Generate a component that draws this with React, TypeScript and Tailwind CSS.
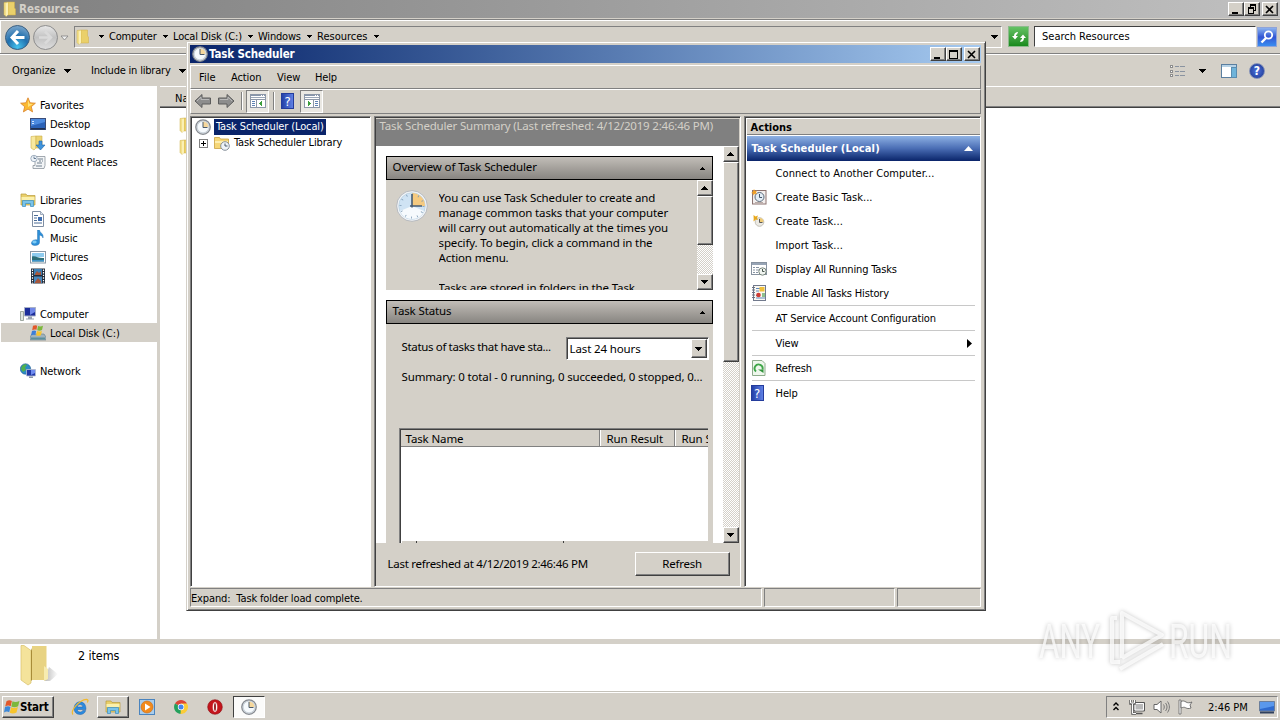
import React from 'react';
import clsx from 'clsx';

type IconProps = { size?: number; className?: string };

const raised =
  'border border-t-white border-l-white border-r-[#404040] border-b-[#404040] bg-[#d4d0c8] shadow-[inset_-1px_-1px_0_#808080]';

/* ---------- icons ---------- */

const Caret = ({ className = '' }: { className?: string }) => (
  <svg width="7" height="4" viewBox="0 0 7 4" className={clsx('shrink-0', className)} shapeRendering="crispEdges">
    <path d="M0 0h7L3.5 4z" fill="#000" />
  </svg>
);

const CrumbCaret = ({ className = '' }: { className?: string }) => (
  <svg width="5" height="3" viewBox="0 0 5 3" className={clsx('mr-[5px] ml-[7px] shrink-0', className)} shapeRendering="crispEdges">
    <path d="M0 0h5L2.5 3z" fill="#000" />
  </svg>
);

const CaretUp = ({ className = '' }: { className?: string }) => (
  <svg width="7" height="4" viewBox="0 0 7 4" className={clsx('shrink-0', className)} shapeRendering="crispEdges">
    <path d="M0 4h7L3.5 0z" fill="#000" />
  </svg>
);

const FolderIcon = ({ size = 16, className = '' }: IconProps) => (
  <svg width={size} height={size} viewBox="0 0 16 16" className={clsx('shrink-0', className)}>
    <path d="M2 1.500l4-.5v12.500l-2 2-2-2z" fill="#f3e08b" stroke="#cfb04b" strokeWidth=".5" />
    <path d="M6 1h6.500v6l1 1v6H6z" fill="#ead06a" stroke="#cfae48" strokeWidth=".5" />
    <path d="M6 1.200v12.500l-2 1.800V2.500z" fill="#fbf0b4" />
  </svg>
);

const ExplorerIcon = ({ size = 16, className = '' }: IconProps) => (
  <svg width={size} height={size} viewBox="0 0 16 16" className={clsx('shrink-0', className)}>
    <path d="M1 2h5l1 1.500h8V13H1z" fill="#e9cf6b" stroke="#b99b3c" strokeWidth=".7" />
    <path d="M1.500 5h13v3h-13z" fill="#fbf0ac" />
    <path d="M2.500 14.500V8.500h11v6h-3v-3h-5v3z" fill="#79c3ea" stroke="#3a8cc0" strokeWidth=".7" />
  </svg>
);

const StarIcon = () => (
  <svg width="16" height="16" viewBox="0 0 16 16" className="shrink-0">
    <path d="M8 .8l2.100 5 5.300.4-4.100 3.500 1.300 5.200L8 12.100l-4.600 2.800 1.300-5.200L.6 6.200l5.300-.4z" fill="#fbb931" stroke="#d9822b" strokeWidth=".8" />
    <path d="M8 3l1.300 3.700 3.700.3-5 3z" fill="#ffe27a" />
  </svg>
);

const DesktopIcon = () => (
  <svg width="16" height="16" viewBox="0 0 16 16" className="shrink-0">
    <rect x=".5" y="2.500" width="15" height="11" fill="#2b62b8" stroke="#3a4c78" />
    <path d="M1 3h14v3L1 10z" fill="#4d8be0" />
    <path d="M1 12h14v1.500H1z" fill="#20304f" />
    <path d="M2 5h2v1H2zM2 7h2v1H2z" fill="#cfe3ff" />
  </svg>
);

const DownloadsIcon = () => (
  <svg width="16" height="16" viewBox="0 0 16 16" className="shrink-0">
    <path d="M1 1.500L6 1v12l-2 2-3-2z" fill="#f8e99f" stroke="#cfb04b" strokeWidth=".6" />
    <path d="M6 1h6v12H6z" fill="#ecd472" stroke="#cfb04b" strokeWidth=".6" />
    <path d="M9 6h3v4h3l-4.500 5L6 10h3z" fill="#3f93dc" stroke="#1f64a8" strokeWidth=".6" />
  </svg>
);

const RecentIcon = () => (
  <svg width="16" height="16" viewBox="0 0 16 16" className="shrink-0">
    <path d="M5 2.500h10v9l-1 3H3v-3h2z" fill="#f2f4f6" stroke="#8b949d" strokeWidth=".8" />
    <path d="M8 5h5M9 7h2M12 7h1M7 9h5M6 12h6" stroke="#71808f" />
    <circle cx="4" cy="4.500" r="3.200" fill="#eef3f8" stroke="#8b9db0" strokeWidth=".8" />
    <path d="M4 2.500v2h2" stroke="#47607c" strokeWidth=".8" fill="none" />
  </svg>
);

const DocumentIcon = () => (
  <svg width="16" height="16" viewBox="0 0 16 16" className="shrink-0">
    <path d="M2.500.5h8l3 3v12h-11z" fill="#fff" stroke="#7f8ea3" />
    <path d="M10.500.5v3h3" fill="#dde6f0" stroke="#7f8ea3" strokeWidth=".7" />
    <path d="M4 4.500h4M4 7h3M4 9.500h3M4 12h8" stroke="#4c6c96" />
    <path d="M8 6h4v4H8z" fill="#3e6db0" />
  </svg>
);

const MusicIcon = () => (
  <svg width="16" height="16" viewBox="0 0 16 16" className="shrink-0">
    <path d="M7.500 0h2c.3 3 4.500 3.500 3.500 8-.5-2-2-2.500-3.500-3v7.500c0 2-2 3-4.500 3s-4-1-3.500-3 3-3.300 6-2.500z" fill="#2d8fd8" stroke="#1764a6" strokeWidth=".4" />
    <ellipse cx="4.500" cy="12" rx="2.200" ry="1.400" fill="#7ccbf5" />
  </svg>
);

const PictureIcon = () => (
  <svg width="16" height="16" viewBox="0 0 16 16" className="shrink-0">
    <rect x=".5" y="2.500" width="15" height="11.500" fill="#fff" stroke="#8b98a5" />
    <path d="M2 4h12v4H2z" fill="#8ecbee" />
    <path d="M2 7.500c4-1 6 2 12 1.500v3.500H2z" fill="#2d6f78" />
    <path d="M2 11h12v1.500H2z" fill="#3d93c9" />
  </svg>
);

const VideoIcon = () => (
  <svg width="16" height="16" viewBox="0 0 16 16" className="shrink-0">
    <path d="M1 .5h14v15H1z" fill="#222b38" />
    <path d="M4 1h8v6H4z" fill="#3c7fb5" />
    <path d="M4 8.500h8v6.500H4z" fill="#4688be" />
    <path d="M5 6l2-3 2 2 2-2v4H5zM5 14l3-4 3 3v2H5z" fill="#a6573c" />
    <path d="M2.500 1.500v14M13.500 1.500v14" stroke="#fff" strokeWidth="1.200" strokeDasharray="1.400 1.200" />
  </svg>
);

const ComputerIcon = () => (
  <svg width="16" height="16" viewBox="0 0 16 16" className="shrink-0">
    <path d="M.5 5.500h3v9h-3z" fill="#dfe4e0" stroke="#8a958d" strokeWidth=".8" />
    <path d="M4.500 1.500h11v8.500h-11z" fill="#1c2d9a" stroke="#a8b1c7" />
    <path d="M10 2h5v4l-5 3z" fill="#7087e8" />
    <path d="M8 10.500h4v2h2v1H6v-1h2z" fill="#98a1b0" />
  </svg>
);

const WinFlag = ({ size = 16 }: { size?: number }) => (
  <svg width={size} height={size} viewBox="0 0 16 16" className="shrink-0">
    <path d="M2.500 2.300C4.500 1 6.200 1.100 7.900 2L6.700 7.200C5 6.400 3.300 6.400 1.200 7.400z" fill="#e2582a" />
    <path d="M8.500 2.300c1.900 1 4.300.9 7-.4l-1.400 5.400c-2.500 1.200-4.800 1.100-6.800.2z" fill="#7cb83c" />
    <path d="M1 8.100c2-1 3.800-1 5.500-.2L5.200 13.200c-1.700-.9-3.500-.8-5.200.3z" fill="#3c88d8" />
    <path d="M7.100 8.200c2 1 4.300 1 6.800-.2l-1.400 5.500c-2.600 1.300-4.800 1.200-6.700.2z" fill="#f7c42c" />
  </svg>
);

const DiskIcon = () => (
  <svg width="16" height="16" viewBox="0 0 16 16" className="shrink-0">
    <path d="M2 9h12l2 3v3H0v-3z" fill="#9fb2bd" stroke="#667b88" strokeWidth=".6" />
    <path d="M1 12.500h14v2H1z" fill="#5b8f9b" />
    <path d="M3 .8c2-.9 3-.7 4.200-.1L6.400 5c-1.200-.6-2.500-.6-4.200.2z" fill="#e2582a" />
    <path d="M8 1c1.400.6 3 .6 5-.2l-1 4.300c-1.700.8-3.400.8-4.800.2z" fill="#7cb83c" />
    <path d="M2 6c1.500-.8 3-.7 4.200-.1l-.9 4.200C4 9.500 2.500 9.500 1 10.300z" fill="#3c7fd8" />
    <path d="M7 6.100c1.400.7 3 .6 4.900-.2l-1 4.300c-1.700.8-3.300.8-4.800.2z" fill="#f7c42c" />
  </svg>
);

const NetworkIcon = () => (
  <svg width="16" height="16" viewBox="0 0 16 16" className="shrink-0">
    <circle cx="5.500" cy="6" r="5.200" fill="#2d8ac6" stroke="#1c5b94" strokeWidth=".6" />
    <path d="M2 3c2-2 4-2.500 5-1L5 4.500 6 7 3 9 1 6z" fill="#50b04c" />
    <path d="M6.500 6.500h9v6.500h-9z" fill="#2238a8" stroke="#b8c2d4" strokeWidth=".8" />
    <path d="M11 7h4v3l-4 2z" fill="#6f8cf0" />
    <path d="M9 13.500h4v1.500H9z" fill="#8b97aa" />
  </svg>
);

const ClockIcon = ({ size = 16, className = '' }: IconProps) => (
  <svg width={size} height={size} viewBox="0 0 32 32" className={clsx('shrink-0', className)}>
    <circle cx="16" cy="16" r="14.500" fill="#d5dbe1" stroke="#85898f" strokeWidth="2.500" />
    <circle cx="16" cy="16" r="11.500" fill="#f6fafd" stroke="#b4c0cb" />
    <path d="M16 16V5a11 11 0 0 1 11 11z" fill="#f5d79c" />
    <path d="M16 6v11h9" fill="none" stroke="#4b5a6b" strokeWidth="2" />
  </svg>
);

const BigClock = () => (
  <svg width="32" height="32" viewBox="0 0 32 32" className="shrink-0">
    <circle cx="16" cy="16" r="15.300" fill="#f2f5f8" stroke="#a9afb6" strokeWidth=".8" />
    <circle cx="16" cy="16" r="13.300" fill="#cfe3f4" stroke="#b4cbdc" strokeWidth=".6" />
    <path d="M4 21A13 13 0 0 0 28 21L16 16z" fill="#f6fafd" />
    <path d="M16 16V3a13 13 0 0 1 13 13z" fill="#f5ca80" />
    <circle cx="16" cy="16" r="11.500" fill="none" stroke="#7d9ab4" strokeWidth="2" strokeDasharray=".8 5.220" />
    <path d="M16 4v13.500M14 16h12" stroke="#465c74" strokeWidth="1.600" />
  </svg>
);

const FolderClockIcon = () => (
  <svg width="16" height="16" viewBox="0 0 16 16" className="shrink-0">
    <path d="M.5 2.500h5l1 1.500h8v9.500H.5z" fill="#f6d778" stroke="#c9a143" strokeWidth=".8" />
    <path d="M1 6h13v2H1z" fill="#fdeeb0" />
    <circle cx="11" cy="11" r="4.300" fill="#eef3f8" stroke="#7a858f" strokeWidth=".9" />
    <path d="M11 8.500V11h2.500" fill="none" stroke="#4a5a6b" />
  </svg>
);

const ArrowGray = ({ flip = false }: { flip?: boolean }) => (
  <svg width="18" height="16" viewBox="0 0 18 16" className={clsx('shrink-0', flip && '-scale-x-100')}>
    <path d="M1 8l7-6.500V5h8.500v6H8v3.500z" fill="#8d8d8d" stroke="#5c5c5c" strokeLinejoin="round" />
    <path d="M3 8l4-4v2.500h8" fill="none" stroke="#b9b9b9" />
  </svg>
);

const PanelIcon = ({ right = false }: { right?: boolean }) => (
  <svg width="16" height="14" viewBox="0 0 16 14" className="shrink-0" shapeRendering="crispEdges">
    <rect x=".5" y=".5" width="15" height="13" fill="#fff" stroke="#8c97a8" />
    <path d="M1 1h14v1H1z" fill="#8796ac" />
    <path d="M1 3h14v1H1z" fill="#9aa6b8" />
    <path d="M11 1h1v1h-1zM13 1h1v1h-1z" fill="#fff" />
    {right ? (
      <>
        <path d="M9.500 5v8M1 5.500h14" stroke="#8c97a8" />
        <path d="M11 7.500h3M11 9.500h3M11 11.500h3" stroke="#5f83b5" />
        <path d="M4 7l3 2.500L4 12z" fill="#3c9d3c" />
      </>
    ) : (
      <>
        <path d="M6.500 5v8M1 5.500h14" stroke="#8c97a8" />
        <path d="M2 7.500h3M2 9.500h3M2 11.500h3" stroke="#5f83b5" />
        <path d="M12 7v5L9 9.500z" fill="#3c9d3c" />
      </>
    )}
  </svg>
);

const HelpBook = ({ className = '' }: { className?: string }) => (
  <span
    className={clsx(
      'flex h-4 w-[13px] shrink-0 items-center justify-center border border-[#243c9c] bg-linear-to-r from-[#2440a8] to-[#5f80e4] text-[13px] leading-none text-white',
      className
    )}
  >
    ?
  </span>
);

const BasicTaskIcon = () => (
  <svg width="16" height="16" viewBox="0 0 16 16" className="shrink-0">
    <rect x="1.500" y="1.500" width="13.500" height="13.500" fill="#f3efee" stroke="#8c7370" />
    <circle cx="8.500" cy="8" r="4.500" fill="#e3edf6" stroke="#5c6b7a" />
    <path d="M8.500 5v3.500H11" fill="none" stroke="#44566a" />
    <path d="M3 0l1 2 2-.5L5 3.500 6 5l-2.200-.3L2.500 6.500 2 4.500 0 4l1.800-1z" fill="#f0a028" />
    <path d="M4 13.500h8" stroke="#b8aaa6" />
  </svg>
);

const TaskIcon = () => (
  <svg width="16" height="16" viewBox="0 0 16 16" className="shrink-0">
    <circle cx="8.500" cy="9" r="4.300" fill="#eceae4" stroke="#c4c1b8" />
    <path d="M8.500 9V5a4 4 0 0 1 4 4z" fill="#f0cc78" />
    <path d="M8.500 6v3.500h3" fill="none" stroke="#5b5a55" />
    <path d="M2.500 2l2 1.500 2.500-1L6 5l1 2-2.200-.5L2.500 8.500l.2-2.800z" fill="#e8a81c" />
  </svg>
);

const RunningIcon = () => (
  <svg width="16" height="16" viewBox="0 0 16 16" className="shrink-0">
    <rect x=".5" y="1.500" width="15" height="12" fill="#fff" stroke="#8792a0" />
    <path d="M1 2h14v2H1z" fill="#97a4b5" />
    <path d="M2 6.500h2M5 6.500h3M2 9h2M5 9h3M2 11.500h2M5 11.500h2" stroke="#8794a4" />
    <circle cx="11.500" cy="10.500" r="3.700" fill="#f0f4f0" stroke="#78857c" />
    <path d="M11.500 8v2.500h2" fill="none" stroke="#46554c" />
  </svg>
);

const HistoryIcon = () => (
  <svg width="16" height="16" viewBox="0 0 16 16" className="shrink-0">
    <rect x="2.500" y=".5" width="12" height="15" fill="#faf8f2" stroke="#71798c" />
    <path d="M1 2.500h3M1 5h3M1 7.500h3M1 10h3M1 12.500h3" stroke="#6b7080" />
    <path d="M5 3.500h4M5 6h3M5 10.500h2M5 13h9" stroke="#5f88bd" />
    <rect x="8.500" y="2" width="5" height="4.500" fill="#f0c03a" />
    <circle cx="7.500" cy="10" r="2.300" fill="#d03c34" />
    <path d="M11 8h3v4h-3z" fill="#8ec08c" />
  </svg>
);

const RefreshIcon = () => (
  <svg width="16" height="16" viewBox="0 0 16 16" className="shrink-0">
    <path d="M1.500.5h9.500l3 3v12H1.500z" fill="#eef7ec" stroke="#8dab8b" />
    <path d="M5 11.500A4 4 0 1 1 11.500 9.500" fill="none" stroke="#3ea648" strokeWidth="1.900" />
    <path d="M7 9.500h5.500V13z" fill="#2f933a" />
  </svg>
);

/* ---------- small controls ---------- */

const CaptionButton = ({ kind }: { kind: 'min' | 'max' | 'restore' | 'close' }) => (
  <button className={clsx('flex h-[14px] w-4 items-center justify-center', raised)}>
    <svg width="12" height="11" viewBox="0 0 12 11" shapeRendering="crispEdges" className="shrink-0">
      {kind === 'min' && <path d="M2 8h6v2H2z" />}
      {kind === 'max' && <path d="M1 1h9v9H1zM2 3v6h7V3z" fillRule="evenodd" />}
      {kind === 'restore' && (
        <path d="M4 0h6v7H8V6h1V2H5v1H4zM2 3h6v7H2zM3 5v4h4V5z" fillRule="evenodd" />
      )}
      {kind === 'close' && (
        <path d="M2 2l7 7M9 2l-7 7" stroke="#000" strokeWidth="1.600" shapeRendering="auto" />
      )}
    </svg>
  </button>
);

const track =
  'bg-[repeating-conic-gradient(#ffffff_0_25%,#d4d0c8_0_50%)] bg-[length:2px_2px]';

const ScrollBar = ({ thumb }: { thumb: string }) => (
  <div className={clsx('flex w-4 shrink-0 flex-col', track)}>
    <div className={clsx('flex h-[16px] items-center justify-center', raised)}>
      <CaretUp />
    </div>
    <div className={clsx(thumb, raised)} />
    <div className={clsx('mt-auto flex h-[16px] items-center justify-center', raised)}>
      <Caret />
    </div>
  </div>
);

/* ---------- explorer window ---------- */

const places = [
  { label: 'Favorites', icon: <StarIcon />, root: true },
  { label: 'Desktop', icon: <DesktopIcon /> },
  { label: 'Downloads', icon: <DownloadsIcon /> },
  { label: 'Recent Places', icon: <RecentIcon /> },
  null,
  { label: 'Libraries', icon: <ExplorerIcon />, root: true },
  { label: 'Documents', icon: <DocumentIcon /> },
  { label: 'Music', icon: <MusicIcon /> },
  { label: 'Pictures', icon: <PictureIcon /> },
  { label: 'Videos', icon: <VideoIcon /> },
  null,
  { label: 'Computer', icon: <ComputerIcon />, root: true },
  { label: 'Local Disk (C:)', icon: <DiskIcon />, selected: true },
  null,
  { label: 'Network', icon: <NetworkIcon />, root: true }
];

const Explorer = () => (
  <div className="flex h-[692px] flex-col">
    <div className="flex h-[18px] shrink-0 items-center bg-linear-to-r from-[#808080] to-[#c0c0c0] pr-[2px] pl-[2px]">
      <FolderIcon />
      <span className="ml-[1px] text-[11.500px] font-bold text-[#d4d0c8]">Resources</span>
      <div className="ml-auto flex">
        <CaptionButton kind="min" />
        <CaptionButton kind="restore" />
        <span className="w-[2px]" />
        <CaptionButton kind="close" />
      </div>
    </div>

    {/* address bar */}
    <div className="mt-[1px] flex h-[35px] shrink-0 items-center border-t border-b border-t-[#808080] border-b-[#808080] pl-1 shadow-[inset_1px_1px_0_#fff]">
      <svg width="66" height="30" viewBox="0 0 66 30" className="shrink-0">
        <defs>
          <radialGradient id="back" cx=".5" cy=".9" r=".9">
            <stop offset="0" stopColor="#45c3ee" />
            <stop offset=".5" stopColor="#2170ae" />
            <stop offset="1" stopColor="#7da7cc" />
          </radialGradient>
          <linearGradient id="fwd" x2="0" y2="1">
            <stop offset="0" stopColor="#e8e8e8" />
            <stop offset=".5" stopColor="#c2c2c2" />
            <stop offset="1" stopColor="#dedede" />
          </linearGradient>
        </defs>
        <circle cx="13.500" cy="15.500" r="12" fill="url(#back)" stroke="#3b5f80" />
        <path d="M14 9l-6 6.500 6 6.500M8.500 15.500h12" fill="none" stroke="#fff" strokeWidth="3" />
        <circle cx="41.500" cy="15.500" r="12" fill="url(#fwd)" stroke="#8d8d8d" />
        <path d="M41 9.500l6 6-6 6M35 15.500h11.500" fill="none" stroke="#dadada" strokeWidth="2.500" />
        <path d="M57 14h7l-3.500 4z" fill="#f0f0f0" stroke="#808080" strokeWidth=".8" />
      </svg>
      <div className="ml-1 flex h-[22px] w-[928px] shrink-0 items-center border border-t-[#808080] border-r-white border-b-white border-l-[#808080]">
        <FolderIcon />
        <CrumbCaret className="ml-[8px]" />
        <span className="w-[47px] tracking-[-0.2px]">Computer</span>
        <CrumbCaret />
        <span className="w-[68px] tracking-[-0.15px] whitespace-nowrap">Local Disk (C:)</span>
        <CrumbCaret />
        <span className="w-[42px] tracking-[-0.2px]">Windows</span>
        <CrumbCaret />
        <span className="w-[50px]">Resources</span>
        <CrumbCaret />
        <Caret className="mr-[3px] ml-auto" />
      </div>
      <div className="ml-[6px] flex size-[21px] items-center justify-center border border-[#8dbb8d] bg-linear-to-b from-[#63c263] to-[#178a1c]">
        <svg width="16" height="16" viewBox="0 0 16 16">
          <path d="M1 7h2c0-3 2-4 4-4L6 5.500c-1 0-1 .5-1 1.500h2l-3 3.500zM15 9h-2c0 3-2 4-4 4l1-2.500c1 0 1-.5 1-1.500H9l3-3.500z" fill="#fff" />
        </svg>
      </div>
      <div className="ml-[5px] flex h-[21px] w-[222px] shrink-0 items-center border border-t-[#404040] border-r-white border-b-white border-l-[#404040] bg-white pt-[1px] pl-[7px]">
        Search Resources
      </div>
      <div className="ml-[1px] flex size-[20px] items-center justify-center border border-[#90a4d8] bg-linear-to-b from-[#8db2ee] via-[#3455d4] to-[#3a8df0]">
        <svg width="16" height="16" viewBox="0 0 16 16" fill="none" stroke="#fff">
          <circle cx="9.500" cy="6" r="3.700" strokeWidth="1.800" />
          <path d="M7 9l-4.500 4.500" strokeWidth="2.400" />
        </svg>
      </div>
    </div>

    {/* command bar */}
    <div className="flex h-[32px] shrink-0 items-center border-t border-white pl-3">
      <span className="w-[44px] tracking-[-0.1px]">Organize</span>
      <Caret className="ml-[8px]" />
      <span className="ml-[20px] w-[79px] tracking-[-0.2px] whitespace-nowrap">Include in library</span>
      <Caret className="ml-[9px]" />
      <div className="ml-auto flex items-center pr-[15px]">
        <svg width="16" height="14" viewBox="0 0 16 14" shapeRendering="crispEdges">
          <path d="M.5 1.500h2v2h-2zM.5 6.500h2v2h-2zM.5 10.500h2v2h-2z" fill="#fff" stroke="#8c8c8c" />
          <path d="M5 2.500h4M10 2.500h5M5 7.500h4M10 7.500h5M5 11.500h4M10 11.500h5" stroke="#8a93a0" />
        </svg>
        <Caret className="mr-[15px] ml-[13px]" />
        <svg width="16" height="14" viewBox="0 0 16 14" shapeRendering="crispEdges">
          <rect x=".5" y=".5" width="15" height="13" fill="#fff" stroke="#5a7fa0" />
          <path d="M1 1h14v2H1z" fill="#b6d2e6" />
          <path d="M10 3h5v10h-5z" fill="#6fb4da" stroke="#5a8db0" />
        </svg>
        <span className="ml-[12px] flex size-4 items-center justify-center rounded-full border border-[#8391b8] bg-radial from-[#4d74e0] to-[#1c348c] text-[12px] leading-none font-bold text-white">
          ?
        </span>
      </div>
    </div>

    <div className="flex h-[553px] shrink-0">
      <div className="w-[157px] bg-white pt-[9px] pl-[1px]">
        {places.map((place, i) =>
          place ? (
            <div
              key={i}
              className={clsx(
                'flex h-[19px] items-center gap-1',
                place.root ? 'pl-[19px]' : 'pl-[29px]',
                place.selected && 'bg-[#d4d0c8]'
              )}
            >
              {place.icon}
              <span className="pt-[2px] tracking-[-0.1px]">{place.label}</span>
            </div>
          ) : (
            <div key={i} className="h-[19px]" />
          )
        )}
      </div>
      <div className="w-[3px]" />
      <div className="flex flex-1 flex-col bg-white">
        <div className="flex h-[22px] items-center border-t border-b border-t-white border-b-[#404040] bg-[#d4d0c8] pt-[3px] pl-[15px] shadow-[inset_0_-1px_0_#808080]">
          Name
        </div>
        <div className="flex flex-col gap-[6px] pt-[9px] pl-[18px]">
          <FolderIcon />
          <FolderIcon />
        </div>
      </div>
    </div>

    {/* details pane */}
    <div className="mt-[5px] flex flex-1 border-b border-[#c4c1b9] bg-white pl-[18px]">
      <svg width="42" height="44" viewBox="0 0 42 44" className="shrink-0">
        <defs>
          <linearGradient id="shade" x2="1" y2="0">
            <stop offset="0" stopColor="#999" />
            <stop offset="1" stopColor="#fff" />
          </linearGradient>
        </defs>
        <path d="M26 37h6l8-7-9-7z" fill="url(#shade)" opacity=".7" />
        <path d="M14 2h14.500v34H14z" fill="#e8d383" />
        <path d="M26 22l4 3v10l-4 2z" fill="#f7ecb0" />
        <path d="M3 1.500h3l7 5V39l-3 2-7-5z" fill="#f4e39b" stroke="#d9c06a" strokeWidth=".7" />
        <path d="M13 6.500V37l1-1V4z" fill="#a88c38" />
      </svg>
      <span className="mt-[5px] ml-[18px] text-[12.500px] tracking-[-0.1px]">2 items</span>
    </div>
  </div>
);

/* ---------- task scheduler window ---------- */

const actions = [
  { label: 'Connect to Another Computer...' },
  { label: 'Create Basic Task...', icon: <BasicTaskIcon /> },
  { label: 'Create Task...', icon: <TaskIcon /> },
  { label: 'Import Task...' },
  { label: 'Display All Running Tasks', icon: <RunningIcon /> },
  { label: 'Enable All Tasks History', icon: <HistoryIcon />, line: true },
  { label: 'AT Service Account Configuration', line: true },
  { label: 'View', line: true, more: true },
  { label: 'Refresh', icon: <RefreshIcon />, line: true },
  { label: 'Help', icon: <HelpBook /> }
];

const sunken =
  'border border-t-[#808080] border-l-[#808080] border-r-white border-b-white shadow-[inset_1px_1px_0_#404040]';

const CardHeader = ({ title }: { title: string }) => (
  <div className="flex h-6 shrink-0 items-center border border-black bg-linear-to-b from-[#c2beb8] to-[#888581] pr-[7px] pb-[2px] pl-[6px]">
    <span className="tracking-[-0.12px]">{title}</span>
    <CaretUp className="mt-[3px] ml-auto h-[3px] w-[5px]" />
  </div>
);

const Summary = () => (
  <div
    className={clsx(
      "flex w-[368px] flex-col pt-[2px] pr-[1px] pl-[1px] [font-family:'Noto_Sans','Open_Sans',sans-serif] text-[11.500px] tracking-[-0.13px]",
      sunken
    )}
  >
    <div className="h-[27px] shrink-0 bg-[#808080] pl-[4px] leading-[14px] tracking-[-0.2px] text-[#d4d0c8]">
      <span>Task Scheduler Summary (Last refreshed: 4/12/2019 2:46:46 PM)</span>
    </div>
    <div className="flex h-[397px] shrink-0 bg-white">
      <div className="flex w-[337px] flex-col overflow-hidden pt-[10px] pl-[10px]">
        <CardHeader title="Overview of Task Scheduler" />
        <div className="flex h-[110px] shrink-0 bg-[#d4d0c8] pl-[10px]">
          <div className="mt-[10px]">
            <BigClock />
          </div>
          <div className="mt-[10px] ml-[11px] h-[100px] w-[258px] overflow-hidden leading-[15px] whitespace-nowrap">
            <p>You can use Task Scheduler to create and</p>
            <p>manage common tasks that your computer</p>
            <p>will carry out automatically at the times you</p>
            <p>specify. To begin, click a command in the</p>
            <p>Action menu.</p>
            <p className="mt-[15px]">Tasks are stored in folders in the Task</p>
          </div>
          <ScrollBar thumb="h-[49px]" />
        </div>
        <div className="h-[10px] shrink-0" />
        <CardHeader title="Task Status" />
        <div className="flex h-[219px] shrink-0 flex-col overflow-hidden bg-[#d4d0c8] pr-[4px] pl-[14px]">
          <div className="mt-[13px] flex h-[23px] items-center justify-between pl-[2px]">
            <span className="-mt-1 tracking-[-0.35px]">Status of tasks that have sta...</span>
            <div className={clsx('flex h-[23px] w-[143px] items-center bg-white p-[1px] pl-[3px]', sunken)}>
              <span>Last 24 hours</span>
              <span className={clsx('ml-auto flex h-[19px] w-4 items-center justify-center', raised)}>
                <Caret />
              </span>
            </div>
          </div>
          <p className="mt-[8px] h-[18px] pl-[2px] leading-[18px] tracking-[-0.15px] whitespace-nowrap">
            Summary: 0 total - 0 running, 0 succeeded, 0 stopped, 0...
          </p>
          <div className="-ml-[1px] mt-[42px] mr-[1px] flex flex-1 flex-col border-t border-l border-[#808080] bg-white shadow-[inset_1px_1px_0_#404040]">
            <div className="mt-[1px] ml-[1px] flex h-[17px] border-b border-[#808080] bg-[#d4d0c8] leading-[17px] whitespace-nowrap">
              <span className="w-[199px] shrink-0 border-r border-[#808080] pl-[5px]">Task Name</span>
              <span className="w-[75px] shrink-0 border-r border-l border-r-[#808080] border-l-white pl-[6px]">Run Result</span>
              <span className="flex-1 overflow-hidden border-l border-white pl-[6px]">Run Start</span>
            </div>
            <div className="mt-auto ml-[2px] flex h-[2px] bg-[#d4d0c8]">
              <span className="w-[15px] border-r border-[#404040]" />
              <span className="w-[147px] border-r border-[#404040]" />
            </div>
          </div>
        </div>
      </div>
      <div className="ml-auto flex">
        <ScrollBar thumb="h-[200px]" />
      </div>
    </div>
    <div className="flex flex-1 items-start pr-[9px] pl-[12px]">
      <span className="mt-[14px] tracking-[-0.28px]">Last refreshed at 4/12/2019 2:46:46 PM</span>
      <button className={clsx('mt-[9px] ml-auto h-[24px] w-[95px] pb-[1px] tracking-[-0.2px]', raised)}>Refresh</button>
    </div>
  </div>
);

const TaskScheduler = () => (
  <div className="absolute top-[41px] left-[186px] flex h-[570px] w-[800px] flex-col border border-t-[#d4d0c8] border-r-[#404040] border-b-[#404040] border-l-[#d4d0c8] bg-[#d4d0c8] p-[3px] pr-[4px] shadow-[inset_1px_1px_0_#fff,inset_-1px_-1px_0_#808080]">
    <div className="flex h-[18px] shrink-0 items-center bg-linear-to-r from-[#0a246a] to-[#a6caf0] pr-[1px] pl-[2px]">
      <ClockIcon />
      <span className="ml-[1px] text-[11.500px] font-bold tracking-[-0.15px] text-white">Task Scheduler</span>
      <div className="ml-auto flex">
        <CaptionButton kind="min" />
        <CaptionButton kind="max" />
        <span className="w-[2px]" />
        <CaptionButton kind="close" />
      </div>
    </div>
    <div className="mt-[2px] flex h-[24px] shrink-0 items-center border-t border-r border-b border-l border-[#808080] border-t-white border-l-white pt-[1px] pl-[8px]">
      <span className="w-[32px]">File</span>
      <span className="w-[46px] tracking-[-0.1px]">Action</span>
      <span className="w-[38px]">View</span>
      <span className="tracking-[-0.2px]">Help</span>
    </div>
    <div className="flex h-[25px] shrink-0 items-center border border-[#808080] border-t-white border-l-white pb-[1px] pl-[3px]">
      <ArrowGray />
      <span className="w-[5px]" />
      <ArrowGray flip />
      <span className="mr-[3px] ml-[6px] h-[18px] w-[2px] border-l border-l-[#808080] bg-white" />
      <span className="flex size-[23px] items-center justify-center border border-[#808080] border-r-white border-b-white bg-[#eae8e3]">
        <PanelIcon />
      </span>
      <span className="mr-[6px] ml-[4px] h-[18px] w-[2px] border-l border-l-[#808080] bg-white" />
      <HelpBook />
      <span className="ml-[6px] flex size-[23px] items-center justify-center border border-[#808080] border-r-white border-b-white bg-[#eae8e3]">
        <PanelIcon right />
      </span>
    </div>

    <div className="mt-[2px] flex h-[471px] shrink-0 gap-[3px]">
      <div className={clsx('w-[181px] bg-white pt-[2px] pl-[2px]', sunken)}>
        <div className="flex h-[16px] items-center pl-[2px]">
          <ClockIcon />
          <span className="ml-[3px] bg-[#0a246a] px-[2px] leading-[16px] tracking-[-0.12px] text-white">
            Task Scheduler (Local)
          </span>
        </div>
        <div className="flex h-[16px] items-center pl-[6px]">
          <svg width="9" height="9" viewBox="0 0 9 9" shapeRendering="crispEdges" className="shrink-0">
            <rect x=".5" y=".5" width="8" height="8" fill="#fff" stroke="#808080" />
            <path d="M2 4.500h5M4.500 2v5" stroke="#000" />
          </svg>
          <span className="ml-[6px] flex items-center gap-1">
            <FolderClockIcon />
            <span className="tracking-[-0.16px]">Task Scheduler Library</span>
          </span>
        </div>
      </div>

      <Summary />

      <div className={clsx('flex w-[238px] flex-col bg-white pt-[2px] pl-[2px]', sunken)}>
        <div className="h-[16px] shrink-0 border-b border-[#808080] bg-[#d4d0c8] pl-[4px] text-[11px] leading-[17px] font-bold">
          Actions
        </div>
        <div className="flex h-[26px] shrink-0 items-center border-t border-white bg-linear-to-b from-[#8fb2e4] via-[#4a6db4] to-[#0a246a] pr-[7px] pl-[5px] font-bold text-white">
          <span className="pt-[1px] tracking-[0.13px]">Task Scheduler (Local)</span>
          <svg width="9" height="5" viewBox="0 0 9 5" className="ml-auto">
            <path d="M0 5h9L4.500 0z" fill="#fff" />
          </svg>
        </div>
        {actions.map((action) => (
          <React.Fragment key={action.label}>
            <div className="flex h-6 shrink-0 items-center pr-[8px] pl-[4px]">
              <span className="w-[25px]">{action.icon}</span>
              <span
                className={clsx(
                  'pt-[2px] whitespace-nowrap',
                  action.label.endsWith('...') ? 'tracking-[0.05px]' : 'tracking-[-0.15px]'
                )}
              >
                {action.label}
              </span>
              {action.more && (
                <svg width="5" height="9" viewBox="0 0 5 9" className="ml-auto">
                  <path d="M0 0v9l5-4.500z" />
                </svg>
              )}
            </div>
            {action.line && <div className="mr-[5px] ml-[5px] h-px shrink-0 bg-[#c8c8c8]" />}
          </React.Fragment>
        ))}
      </div>
    </div>

    <div className="mt-[1px] flex h-[19px] shrink-0 gap-[2px]">
      <div className="w-[572px] border border-[#808080] border-r-white border-b-white leading-[19px] tracking-[-0.14px] whitespace-pre">
        Expand:  Task folder load complete.
      </div>
      <div className="w-[131px] border border-[#808080] border-r-white border-b-white" />
      <div className="flex-1 border border-[#808080] border-r-white border-b-white" />
    </div>
  </div>
);

/* ---------- taskbar ---------- */

const TaskBar = () => (
  <div className="flex h-7 items-center border-t border-white pl-[2px]">
    <button className={clsx('mt-[1px] flex h-[22px] w-[52px] items-center pl-[1px] font-bold', raised)}>
      <WinFlag />
      <span className="text-[11.500px] tracking-[-0.2px]">Start</span>
    </button>
    <div className="mt-[1px] ml-[9px] flex items-center">
      <span className="flex w-[34px] justify-center">
        <svg width="18" height="18" viewBox="0 0 18 18">
          <path d="M15 11.500H6.200c.3 3 4.300 3.300 5.500 1h3C13.500 16.500 9.500 17 6.500 16 2 14 2.500 8 5 5.500c3-3 10-2.500 10 6zM6.300 9h5.500c-.3-3.200-5-3.200-5.500 0z" fill="#2a8ade" stroke="#1b5fae" strokeWidth=".5" fillRule="evenodd" />
          <path d="M2 16.500C-1 13 8 2 15.500 1.300c2 0 1.700 1.700.8 3.200" fill="none" stroke="#f2b92c" strokeWidth="1.200" />
        </svg>
      </span>
      <span className={clsx('flex h-[22px] w-[32px] items-center justify-center', raised)}>
        <ExplorerIcon />
      </span>
      <span className="ml-[1px] flex w-[34px] justify-center">
        <svg width="16" height="16" viewBox="0 0 16 16">
          <rect x=".5" y=".5" width="15" height="15" fill="#a9cdec" stroke="#4a84be" />
          <circle cx="8" cy="8" r="6" fill="#f28a1c" stroke="#c96910" strokeWidth=".6" />
          <path d="M6 4.500v7L11.500 8z" fill="#fff" />
        </svg>
      </span>
      <span className="flex w-[34px] justify-center">
        <svg width="14" height="14" viewBox="0 0 14 14">
          <path d="M7 7L1 3.500A7 7 0 0 1 13 3.500z" fill="#dc4437" />
          <path d="M7 7L1 3.500A7 7 0 0 0 6.500 14L10 8.500z" fill="#25a05c" />
          <path d="M7 7l-.5 7A7 7 0 0 0 13 3.500H7z" fill="#fbcc38" />
          <circle cx="7" cy="7" r="3.200" fill="#fff" />
          <circle cx="7" cy="7" r="2.500" fill="#4584ee" />
        </svg>
      </span>
      <span className="flex w-[34px] justify-center">
        <svg width="16" height="16" viewBox="0 0 16 16">
          <circle cx="8" cy="8" r="7.300" fill="#c4151c" stroke="#8c0c10" strokeWidth=".6" />
          <ellipse cx="8" cy="8" rx="2.200" ry="4.800" fill="#fff" stroke="#eab0b0" strokeWidth=".4" />
          <ellipse cx="8" cy="8" rx=".9" ry="4" fill="#8a1014" />
        </svg>
      </span>
      <span className="ml-[1px] flex h-[22px] w-[32px] items-center justify-center border border-[#404040] border-r-white border-b-white bg-[#fbfbfa]">
        <ClockIcon />
      </span>
    </div>
    <div className="mt-[1px] mr-[2px] ml-auto flex h-[22px] w-[172px] items-center border border-[#808080] border-r-white border-b-white pl-[6px]">
      <svg width="6" height="9" viewBox="0 0 6 9" fill="none" stroke="#000" strokeWidth="1.400" className="-mt-[2px]">
        <path d="M.5 3.500L3 1l2.500 2.500M.5 8L3 5.500 5.500 8" />
      </svg>
      <svg width="16" height="16" viewBox="0 0 16 16" className="ml-[10px] shrink-0">
        <path d="M5 3.500h10.500v8.500H5z" fill="#b9b9b9" stroke="#555" />
        <path d="M6 4.500h8.500V11H6z" fill="none" stroke="#fff" />
        <path d="M7 14.500h6.500" stroke="#555" strokeWidth="1.500" />
        <path d="M1.500 1v3.500h4V1M3.500 4.500v10H7" fill="none" stroke="#555" strokeWidth="2.400" />
        <path d="M1.500 1v3h4V1M3.500 4.500v10H7" fill="none" stroke="#fff" />
      </svg>
      <svg width="17" height="16" viewBox="0 0 17 16" className="ml-[8px] shrink-0">
        <path d="M1 5.500h3L8 2v12l-4-3.500H1z" fill="#fff" stroke="#666" />
        <path d="M10.500 5.500c1 1.500 1 3.500 0 5M12.500 4c2 2.500 2 5.500 0 8M14.500 2.500c2.500 3.500 2.500 7.500 0 11" fill="none" stroke="#777" />
      </svg>
      <svg width="16" height="16" viewBox="0 0 16 16" className="ml-[7px] shrink-0">
        <path d="M2 1h2v14H2z" fill="#fff" stroke="#666" strokeWidth=".8" />
        <path d="M4 2.500c2-1 3.500-.5 5 .5s3.500 1 6 0l-2 3 1 3c-2.500 1-4 .5-5.500-.3S6 8.300 4 9z" fill="#fff" stroke="#666" strokeWidth=".9" />
      </svg>
      <span className="ml-[15px] pt-[1px] whitespace-nowrap">2:46 PM</span>
      <svg width="16" height="13" viewBox="0 0 16 13" className="mr-[2px] ml-auto shrink-0">
        <path d="M.5.5h15v9.500H.5z" fill="#2f6bcf" stroke="#6b7f9c" />
        <path d="M1 1h14v4L1 8z" fill="#5a98ec" />
        <path d="M1 10.500h14v2H1z" fill="#30415e" />
      </svg>
    </div>
  </div>
);

const Watermark = () => (
  <svg width="204" height="68" viewBox="0 0 204 68" className="absolute top-[607px] left-[1036px] drop-shadow-[0_0_2px_rgba(0,0,0,0.3)]">
    <g fill="#fff" fontFamily="Roboto, sans-serif" fontSize="49" opacity=".75">
      <text x="3" y="51" textLength="61" lengthAdjust="spacingAndGlyphs">ANY</text>
      <text x="133" y="51" textLength="63" lengthAdjust="spacingAndGlyphs">RUN</text>
    </g>
    <g fill="none" stroke="#fff" strokeWidth="4" strokeLinejoin="round" opacity=".75">
      <path d="M86 51V6l40 22-40 23" />
      <path d="M81 11h-5v44h8" />
      <path d="M84 62l43-25" />
    </g>
  </svg>
);

export default function App() {
  return (
    <div className="relative h-[720px] w-[1280px] overflow-hidden bg-[#d4d0c8] [font-family:'DejaVu_Sans_Condensed','DejaVu_Sans',sans-serif] text-[11px] leading-[14px] text-black">
      <Explorer />
      <TaskBar />
      <TaskScheduler />
      <Watermark />
    </div>
  );
}
